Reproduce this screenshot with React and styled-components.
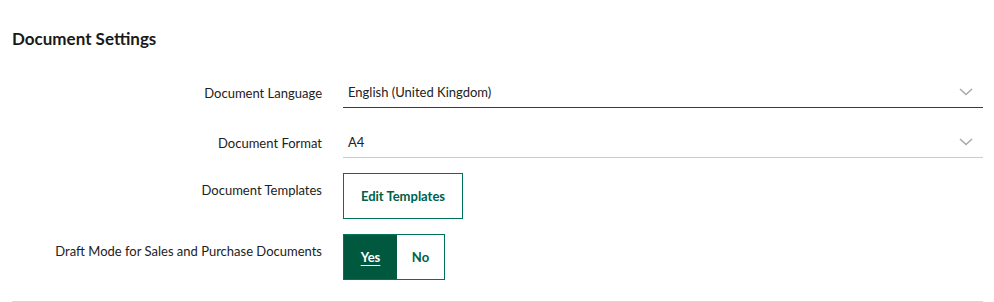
import React from "react";
import styled, { createGlobalStyle } from "styled-components";

const Global = createGlobalStyle`
  html, body { margin: 0; padding: 0; background: #fff; }
  body { font-family: Lato, "Noto Sans", sans-serif; color: #1f1f1f; }
`;

const Page = styled.div`
  padding: 29px 11px 0 12px;
`;

const Heading = styled.h2`
  margin: 0 0 27px 0;
  font-size: 17px;
  line-height: 20px;
  font-weight: 700;
  color: #191919;
`;

const Row = styled.div`
  display: grid;
  grid-template-columns: 310px 1fr;
  column-gap: 21px;
  margin-bottom: ${(p) => p.$mb}px;
`;

const Label = styled.label`
  text-align: right;
  font-size: 13px;
  line-height: 18px;
  padding-top: 8px;
  color: #222;
`;

const Select = styled.div`
  display: flex;
  align-items: center;
  justify-content: space-between;
  height: 31px;
  padding: 0 10px 0 5px;
  border-bottom: 1px solid ${(p) => (p.$focused ? "#00583f" : "#cccccc")};
  font-size: 13px;
  color: #222;
`;

const Chevron = () => (
  <svg width="14" height="8" viewBox="0 0 14 8">
    <path d="M1 1l6 5.5L13 1" fill="none" stroke="#aaaaaa" strokeWidth="1.6" />
  </svg>
);

const Field = styled.div`
  display: flex;
`;

const OutlineButton = styled.button`
  box-sizing: border-box;
  width: 120px;
  height: 46px;
  border: 1px solid #00735a;
  background: #fff;
  color: #00604a;
  font-family: inherit;
  font-size: 13px;
  font-weight: 700;
  padding: 0;
`;

const Toggle = styled.div`
  box-sizing: border-box;
  display: flex;
  height: 46px;
  border: 1px solid #00735a;
`;

const ToggleOption = styled.button`
  width: ${(p) => p.$w}px;
  border: none;
  padding: 0;
  font-family: inherit;
  font-size: 13px;
  font-weight: 700;
  background: ${(p) => (p.$active ? "#00583f" : "#fff")};
  color: ${(p) => (p.$active ? "#fff" : "#00604a")};
  text-decoration: ${(p) => (p.$active ? "underline" : "none")};
  text-underline-offset: 3px;
`;

const Divider = styled.hr`
  margin: 0;
  border: none;
  border-top: 1px solid #d8d8d8;
`;

export default function App() {
  return (
    <>
      <Global />
      <Page>
        <Heading>Document Settings</Heading>
        <Row $mb={18}>
          <Label>Document Language</Label>
          <Select $focused>
            <span>English (United Kingdom)</span>
            <Chevron />
          </Select>
        </Row>
        <Row $mb={15}>
          <Label>Document Format</Label>
          <Select>
            <span>A4</span>
            <Chevron />
          </Select>
        </Row>
        <Row $mb={15}>
          <Label>Document Templates</Label>
          <Field>
            <OutlineButton>Edit Templates</OutlineButton>
          </Field>
        </Row>
        <Row $mb={21}>
          <Label>Draft Mode for Sales and Purchase Documents</Label>
          <Field>
            <Toggle>
              <ToggleOption $active $w={53}>Yes</ToggleOption>
              <ToggleOption $w={47}>No</ToggleOption>
            </Toggle>
          </Field>
        </Row>
        <Divider />
      </Page>
    </>
  );
}
